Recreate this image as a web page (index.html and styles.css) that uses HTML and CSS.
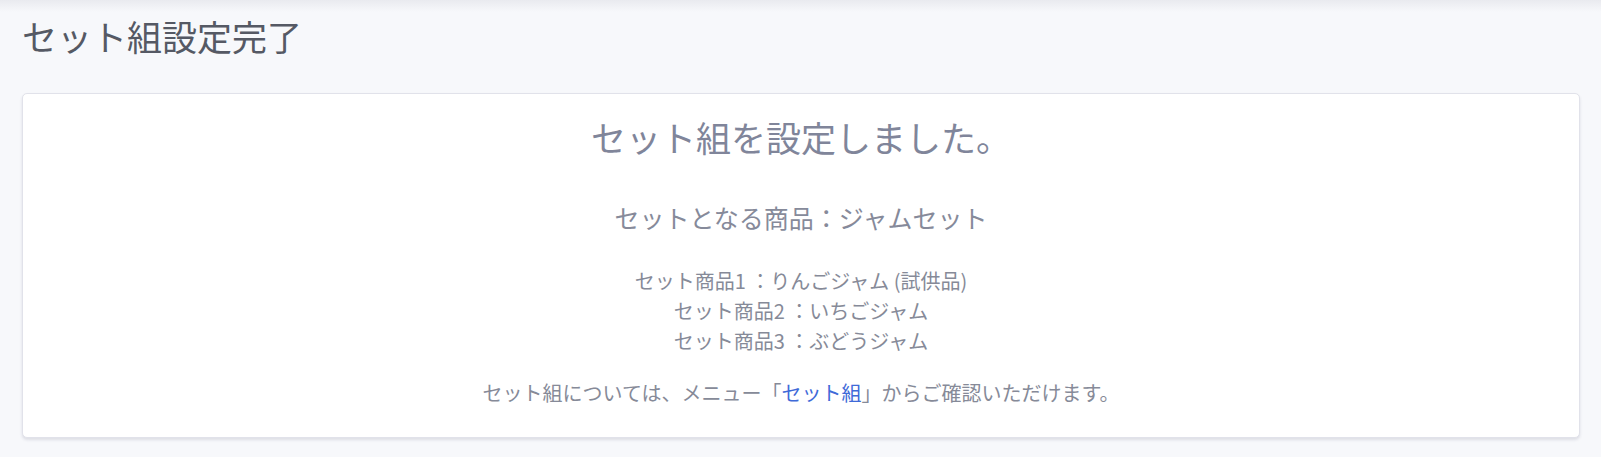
FILE: index.html
```html
<!DOCTYPE html>
<html lang="ja">
<head>
    <meta charset="UTF-8">
    <meta name="viewport" content="width=device-width, initial-scale=1.0">
    <title>セット組設定完了</title>
    <link rel="stylesheet" href="styles.css">
</head>
<body>

    <!-- Page -->
    <div class="page">
        <h1 class="page-title">セット組設定完了</h1>

        <!-- Result card -->
        <div class="card">
            <h2 class="card-heading">セット組を設定しました。</h2>
            <p class="set-name">セットとなる商品：ジャムセット</p>

            <ul class="item-list">
                <li>セット商品1 ：りんごジャム (試供品)</li>
                <li>セット商品2 ：いちごジャム</li>
                <li>セット商品3 ：ぶどうジャム</li>
            </ul>

            <p class="note">セット組については、メニュー「<a href="#">セット組</a>」からご確認いただけます。</p>
        </div>
    </div>

</body>
</html>
```

FILE: styles.css
```css
/* General Styles */
body {
    font-family: "Noto Sans CJK JP", "Noto Sans", sans-serif;
    margin: 0;
    padding: 0;
    background: linear-gradient(#e9eaef, #f7f8fb 12px) no-repeat;
    background-color: #f7f8fb;
    color: #868a98;
}

.page {
    padding: 12px 21px 20px 22px;
}

.page-title {
    margin: 0 0 33px;
    font-size: 35px;
    font-weight: 400;
    line-height: 48px;
    color: #555964;
}

/* Card */
.card {
    background: #ffffff;
    border: 1px solid #e1e2ea;
    border-radius: 5px;
    box-shadow: 0 2px 3px rgba(40, 44, 70, 0.12);
    padding: 23px 20px 29px;
    text-align: center;
}

.card-heading {
    margin: 0;
    font-size: 35px;
    font-weight: 400;
    line-height: 40px;
    color: #80859a;
}

.set-name {
    margin: 44px 0 0;
    font-size: 25px;
    line-height: 32px;
    color: #868a9a;
}

.item-list {
    list-style: none;
    margin: 33px 0 0;
    padding: 0;
    font-size: 20px;
    line-height: 30px;
}

.note {
    margin: 22px 0 0;
    font-size: 20px;
    line-height: 30px;
}

.note a {
    color: #3f6ad8;
    text-decoration: none;
}
```
